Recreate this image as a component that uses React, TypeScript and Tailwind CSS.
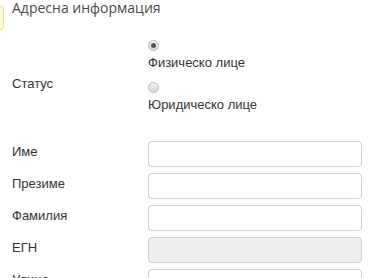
import React from "react";

function Radio({ checked }: { checked?: boolean }) {
  return (
    <span className="flex h-[11px] w-[11px] items-center justify-center rounded-full border border-[#b8b8b8] bg-gradient-to-b from-[#f4f4f4] to-[#d8d8d8]">
      {checked && <span className="h-[5px] w-[5px] rounded-full bg-[#555]" />}
    </span>
  );
}

function Row({ label, disabled }: { label: string; disabled?: boolean }) {
  return (
    <div className="flex h-[26px] items-center">
      <div className="mb-[5px] w-[136px] text-[13px] leading-[17px] text-[#333]">{label}</div>
      <div
        className={
          "h-[26px] w-[214px] rounded-[4px] border border-[#cfcfcf] " +
          (disabled ? "bg-[#eeeeee]" : "bg-white")
        }
      />
    </div>
  );
}

export default function App() {
  return (
    <div
      className="relative h-[278px] w-[370px] overflow-hidden bg-white"
      style={{ fontFamily: '"Liberation Sans", Arial, sans-serif' }}
    >
      <div className="absolute left-[-4px] top-[6px] h-[24px] w-[8px] rounded-[3px] border border-[#e6e09a] bg-[#fdfbd2]" />
      <div className="pl-[12px]">
        <div
          className="mt-[-3px] h-[22px] text-[14px] leading-[22px] text-[#4a4a4a]"
          style={{ fontFamily: '"Open Sans", sans-serif' }}
        >
          Адресна информация
        </div>
        <div className="mt-[17px] flex items-start">
          <div className="mt-[39px] w-[136px] text-[13px] leading-[17px] text-[#333]">Статус</div>
          <div className="flex flex-col">
            <div className="flex h-[42px] flex-col pt-[4px]">
              <Radio checked />
              <div className="mt-[3px] text-[13px] leading-[17px] text-[#333]">Физическо лице</div>
            </div>
            <div className="flex h-[42px] flex-col pt-[4px]">
              <Radio />
              <div className="mt-[3px] text-[13px] leading-[17px] text-[#333]">Юридическо лице</div>
            </div>
          </div>
        </div>
        <div className="mt-[21px] flex flex-col gap-[6px]">
          <Row label="Име" />
          <Row label="Презиме" />
          <Row label="Фамилия" />
          <Row label="ЕГН" disabled />
          <Row label="Улица" />
        </div>
      </div>
    </div>
  );
}
